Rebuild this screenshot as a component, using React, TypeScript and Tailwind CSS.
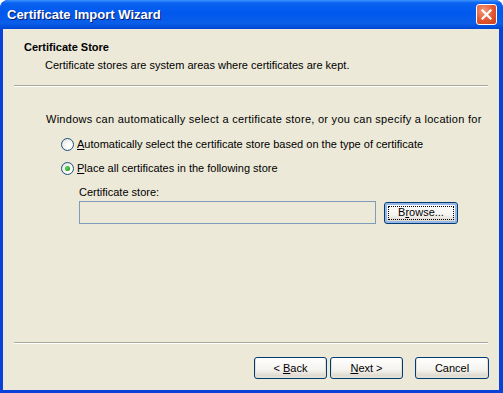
import React from "react";

const font = { fontFamily: '"Liberation Sans", Arial, sans-serif' };

const XpButton = ({
  children,
  focused = false,
  className = "",
}: {
  children: React.ReactNode;
  focused?: boolean;
  className?: string;
}) => (
  <button
    className={`h-[22px] rounded-[3px] border border-[#003c74] bg-[linear-gradient(180deg,#ffffff_0%,#f4f3ee_60%,#d6d0c5_100%)] text-[11px] text-black ${
      focused ? "shadow-[inset_0_0_0_2px_#98b8ea]" : "shadow-[inset_0_-1px_0_1px_#e3e0d5]"
    } ${className}`}
  >
    <span
      className={`flex h-full w-full items-center justify-center ${
        focused ? "outline outline-1 outline-dotted outline-black -outline-offset-[4px]" : ""
      }`}
    >
      {children}
    </span>
  </button>
);

const Radio = ({ checked, children }: { checked?: boolean; children: React.ReactNode }) => (
  <div className="flex h-[13px] items-center">
    <span className="flex h-[13px] w-[13px] items-center justify-center rounded-full border border-[#1c5180] bg-[radial-gradient(circle_at_65%_65%,#ffffff_20%,#dcdcd4_100%)]">
      {checked && (
        <span className="h-[5px] w-[5px] rounded-full bg-[radial-gradient(circle_at_40%_40%,#60d860_0%,#21a121_70%)]" />
      )}
    </span>
    <span className="ml-[3px] text-[11px]">{children}</span>
  </div>
);

export default function App() {
  return (
    <div
      style={font}
      className="flex h-[393px] w-[503px] flex-col overflow-hidden rounded-t-[8px] bg-[#0842d8] text-black"
    >
      {/* title bar */}
      <div className="flex h-[29px] shrink-0 items-center justify-between rounded-t-[8px] bg-[linear-gradient(180deg,#3d95ff_0%,#0a62f0_10%,#0058ee_45%,#0a5ee8_80%,#0046d5_100%)] pl-[7px] pr-[6px]">
        <span className="text-[13px] font-bold text-white [text-shadow:1px_1px_0_#0a1d6a]">
          Certificate Import Wizard
        </span>
        <span className="flex h-[21px] w-[21px] items-center justify-center rounded-[3px] border border-white bg-[radial-gradient(circle_at_35%_30%,#f39b7d_0%,#e2562e_55%,#c9401c_100%)]">
          <svg width="11" height="11" viewBox="0 0 11 11">
            <path d="M1.5 1.5 L9.5 9.5 M9.5 1.5 L1.5 9.5" stroke="#fff" strokeWidth="2.2" strokeLinecap="square" />
          </svg>
        </span>
      </div>

      {/* client area */}
      <div className="mx-[3px] mb-[3px] mr-[4px] flex flex-1 flex-col bg-[#ece9d8]">
        {/* header */}
        <div className="h-[56px] shrink-0 pl-[21px] pt-[12px]">
          <div className="text-[11px] font-bold leading-[13px]">Certificate Store</div>
          <div className="ml-[21px] mt-[5px] text-[11px] leading-[13px]">
            Certificate stores are system areas where certificates are kept.
          </div>
        </div>
        <div className="mx-[11px] h-[2px] shrink-0 border-t border-b border-t-[#aca899] border-b-white" />

        {/* body */}
        <div className="flex flex-1 flex-col pl-[43px] pt-[26px]">
          <div className="text-[11px] leading-[13px] tracking-[0.27px]">
            Windows can automatically select a certificate store, or you can specify a location for
          </div>
          <div className="ml-[15px] mt-[12px] flex flex-col gap-[11px]">
            <Radio>
              <span className="underline">A</span>utomatically select the certificate store based on the type of certificate
            </Radio>
            <Radio checked>
              <span className="underline">P</span>lace all certificates in the following store
            </Radio>
          </div>
          <div className="ml-[33px] mt-[11px] text-[11px] leading-[13px]">Certificate store:</div>
          <div className="ml-[33px] mt-[2px] flex items-center">
            <div className="h-[23px] w-[297px] border border-[#7f9db9] bg-[#ece9d8]" />
            <XpButton focused className="ml-[8px] w-[74px]">
              B<span className="underline">r</span>owse...
            </XpButton>
          </div>
        </div>

        {/* footer */}
        <div className="mx-[11px] h-[2px] shrink-0 border-t border-b border-t-[#aca899] border-b-white" />
        <div className="flex h-[46px] shrink-0 items-start justify-end pr-[10px] pt-[13px]">
          <XpButton className="w-[73px]">
            &lt; <span className="ml-[3px] underline">B</span>ack
          </XpButton>
          <XpButton className="ml-[3px] w-[73px]">
            <span className="underline">N</span>ext &gt;
          </XpButton>
          <XpButton className="ml-[12px] w-[74px]">Cancel</XpButton>
        </div>
      </div>
    </div>
  );
}
